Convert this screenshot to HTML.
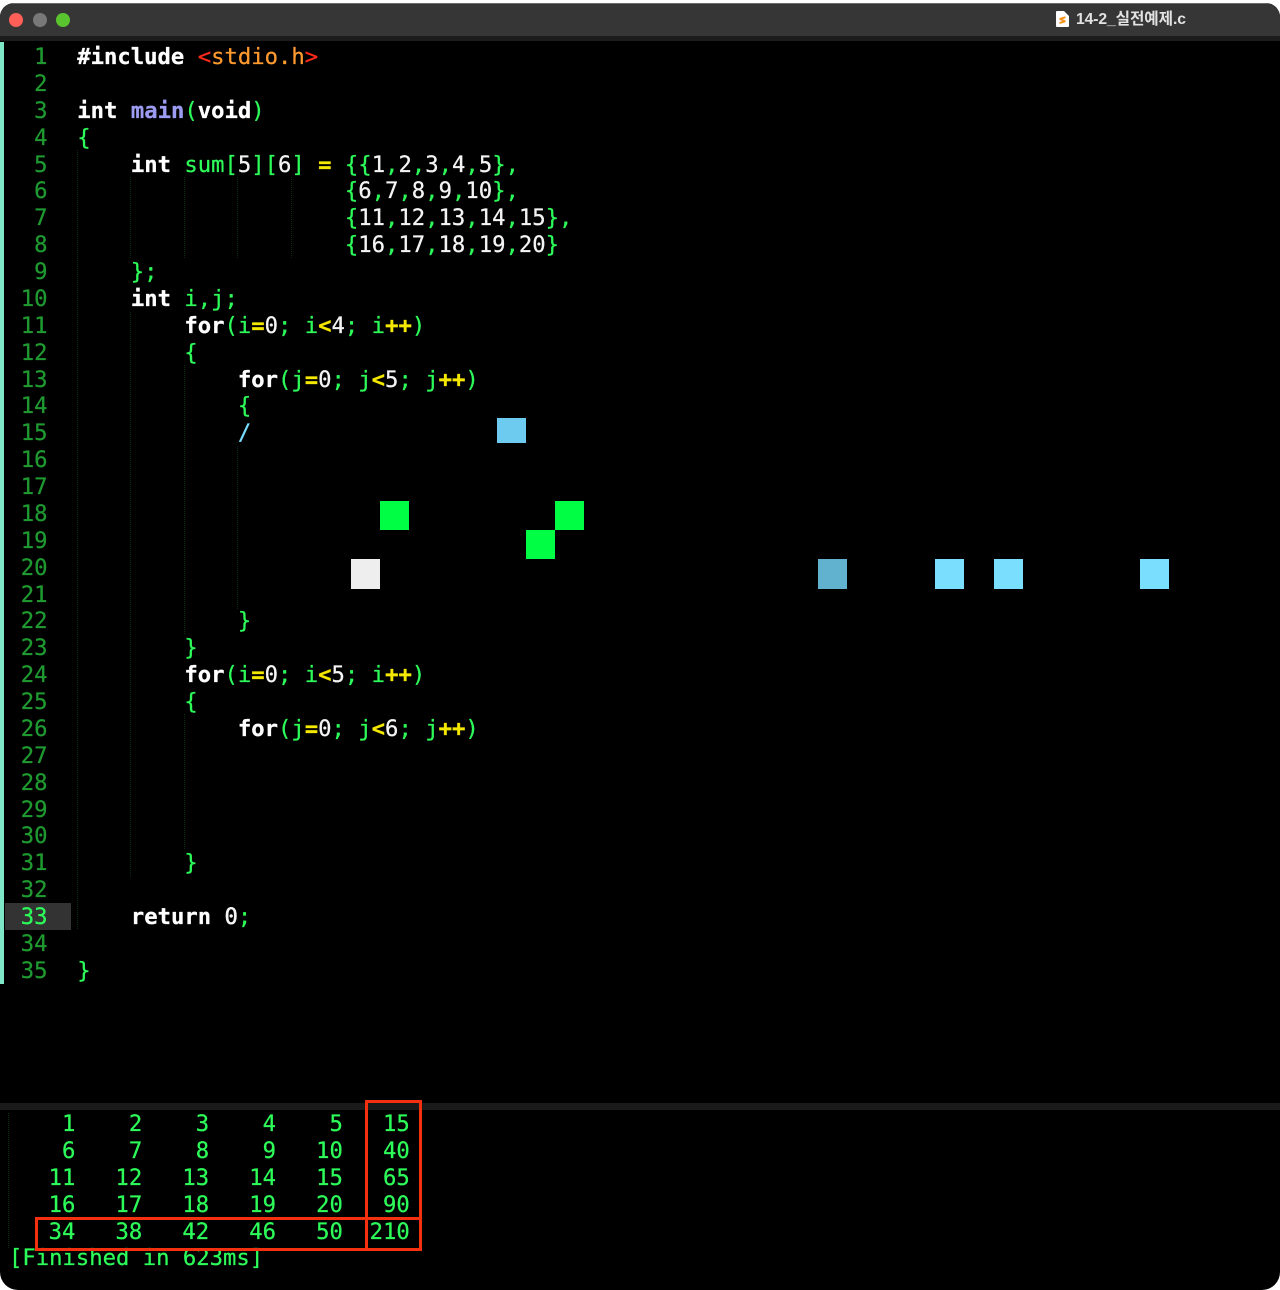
<!DOCTYPE html>
<html><head><meta charset="utf-8"><style>
html,body{margin:0;padding:0;background:#fff;width:1280px;height:1290px;overflow:hidden}
#win{position:absolute;left:0;top:3px;width:1280px;height:1287px;background:#000;border-radius:14px 14px 18px 18px;overflow:hidden}
#bar{position:absolute;left:0;top:0;width:1280px;height:33px;background:#363636;border-top:1px solid #6a6a6a;box-sizing:border-box}
#bar2{position:absolute;left:0;top:33px;width:1280px;height:5px;background:#1c1c1c}
.d{position:absolute;top:10px;width:14px;height:14px;border-radius:50%}
pre{position:absolute;margin:0;font:22.22px/26.88px "DejaVu Sans Mono",monospace;color:#2dfb5a;-webkit-text-stroke:.25px currentColor}
b{font-weight:bold;color:#fff}
i{font-style:normal;color:#f4f4f4}
u{text-decoration:none;font-weight:bold;color:#f4e800}
.a{position:absolute}
.sq{position:absolute}
.gd{position:absolute;width:1px;background-image:linear-gradient(#0a2c12 50%,transparent 50%);background-size:1px 2px}
</style></head><body>
<div id="win">
<div id="bar"></div><div id="bar2"></div>
<div class="d" style="left:9px;background:#ff5f57"></div>
<div class="d" style="left:33px;background:#787878"></div>
<div class="d" style="left:56px;background:#5ac42e"></div>
<svg class="a" style="left:1055px;top:7px" width="15" height="18" viewBox="0 0 15 18"><path d="M2 1H9L14 6V16a1 1 0 0 1-1 1H2a1 1 0 0 1-1-1V2a1 1 0 0 1 1-1Z" fill="#fff"/><path d="M4.5 8 10.5 6.2V8.2L7.5 9.3 10.5 10.4V12.2L4.5 14V12L7.5 11 4.5 10Z" fill="#f5921e"/></svg>
<div class="a" style="left:1076px;top:7px;font:bold 15.7px/20px 'Liberation Sans','Noto Sans CJK KR',sans-serif;color:#e2e2e2;white-space:nowrap;letter-spacing:-.1px">14-2_실전예제.c</div>
<div class="a" style="left:0;top:39px;width:3.5px;height:942px;background:#7ee8c6"></div>
<div class="a" style="left:5px;top:900px;width:66px;height:27px;background:#333"></div>
<div class="gd" style="left:77px;top:147px;height:780px"></div>
<div class="gd" style="left:130px;top:174px;height:81px"></div>
<div class="gd" style="left:130px;top:309px;height:565px"></div>
<div class="gd" style="left:184px;top:174px;height:81px"></div>
<div class="gd" style="left:184px;top:362px;height:270px"></div>
<div class="gd" style="left:184px;top:711px;height:135px"></div>
<div class="gd" style="left:237px;top:174px;height:81px"></div>
<div class="gd" style="left:237px;top:443px;height:163px"></div>
<div class="gd" style="left:291px;top:174px;height:81px"></div>
<pre style="left:0;top:41px;width:47.5px;text-align:right;color:#1f9a30">1
2
3
4
5
6
7
8
9
10
11
12
13
14
15
16
17
18
19
20
21
22
23
24
25
26
27
28
29
30
31
32
<span style="color:#2dfb5a">33</span>
34
35</pre>
<pre style="left:77.3px;top:41px"><b>#include</b> <span style="color:#ff2a1a">&lt;</span><span style="color:#ff9a2e">stdio.h</span><span style="color:#ff2a1a">&gt;</span>

<b>int</b> <b style="color:#9c9cf2">main</b>(<b>void</b>)
{
    <b>int</b> sum[<i>5</i>][<i>6</i>] <u>=</u> {{<i>1</i>,<i>2</i>,<i>3</i>,<i>4</i>,<i>5</i>},
                    {<i>6</i>,<i>7</i>,<i>8</i>,<i>9</i>,<i>10</i>},
                    {<i>11</i>,<i>12</i>,<i>13</i>,<i>14</i>,<i>15</i>},
                    {<i>16</i>,<i>17</i>,<i>18</i>,<i>19</i>,<i>20</i>}
    };
    <b>int</b> i,j;
        <b>for</b>(i<u>=</u><i>0</i>; i<u>&lt;</u><i>4</i>; i<u>++</u>)
        {
            <b>for</b>(j<u>=</u><i>0</i>; j<u>&lt;</u><i>5</i>; j<u>++</u>)
            {
            <span style="color:#7adfff">/</span>






            }
        }
        <b>for</b>(i<u>=</u><i>0</i>; i<u>&lt;</u><i>5</i>; i<u>++</u>)
        {
            <b>for</b>(j<u>=</u><i>0</i>; j<u>&lt;</u><i>6</i>; j<u>++</u>)




        }

    <b>return</b> <i style="-webkit-text-stroke:.5px #f4f4f4">0</i>;

}</pre>
<div class="sq" style="left:497px;top:415px;width:29px;height:25px;background:#6ccbef"></div>
<div class="sq" style="left:380px;top:498px;width:29px;height:29px;background:#00ff44"></div>
<div class="sq" style="left:555px;top:498px;width:29px;height:29px;background:#00ff44"></div>
<div class="sq" style="left:526px;top:527px;width:29px;height:29px;background:#00ff44"></div>
<div class="sq" style="left:351px;top:556px;width:29px;height:30px;background:#eee"></div>
<div class="sq" style="left:818px;top:556px;width:29px;height:30px;background:#60b2cf"></div>
<div class="sq" style="left:935px;top:556px;width:29px;height:30px;background:#7adfff"></div>
<div class="sq" style="left:994px;top:556px;width:29px;height:30px;background:#7adfff"></div>
<div class="sq" style="left:1140px;top:556px;width:29px;height:30px;background:#7adfff"></div>
<div class="a" style="left:0;top:1100px;width:1280px;height:7px;background:#1a1a1a"></div>
<div class="gd" style="left:8px;top:1110px;height:135px"></div>
<pre style="left:8.5px;top:1108px">    1    2    3    4    5   15
    6    7    8    9   10   40
   11   12   13   14   15   65
   16   17   18   19   20   90
   34   38   42   46   50  210</pre>
<pre style="left:9px;top:1242px">[Finished in 623ms]</pre>
<div class="a" style="left:365px;top:1097px;width:57px;height:151px;box-sizing:border-box;border:3px solid #f5300f"></div>
<div class="a" style="left:35px;top:1214px;width:387px;height:34px;box-sizing:border-box;border:3px solid #f5300f"></div>
</div>
</body></html>
